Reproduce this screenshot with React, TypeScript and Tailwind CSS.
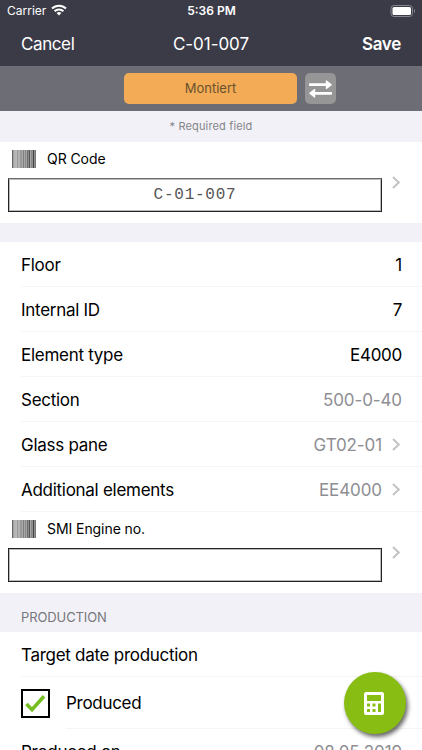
import React from "react";
import clsx from "clsx";

function Chevron() {
  return (
    <svg width="8" height="13" viewBox="0 0 8 13" fill="none" className="shrink-0">
      <path d="M1 1l5.7 5.5L1 12" stroke="#c4c4c7" strokeWidth="2" />
    </svg>
  );
}

const bars = [
  [0, 1.5, "#666"],
  [2, 2, "#b5b5b5"],
  [4.5, 1.5, "#999"],
  [6.5, 1, "#888"],
  [8, 2, "#999"],
  [10.6, 1.2, "#666"],
  [12.4, 1.6, "#888"],
  [14.6, 1.2, "#555"],
  [16.4, 2, "#555"],
  [19, 1, "#888"],
  [20.5, 2, "#444"],
  [23, 1, "#777"],
] as const;

function Barcode() {
  return (
    <svg width="24" height="18" viewBox="0 0 24 18" className="shrink-0">
      <rect width="24" height="18" fill="#dcdcdc" />
      {bars.map(([x, w, fill]) => (
        <rect key={x} x={x} width={w} height="18" fill={fill} />
      ))}
    </svg>
  );
}

function CodeField({ label, value }: { label: string; value?: string }) {
  return (
    <div className="flex h-[81px] shrink-0 items-center bg-white pl-2 pr-[22px]">
      <div className="h-full w-[374px] pt-2">
        <div className="flex h-[18px] items-center gap-[11px] pl-1">
          <Barcode />
          <span className="pb-0.5 text-[14px] tracking-[-0.07px]">{label}</span>
        </div>
        <div
          className={clsx(
            "mt-[10px] flex h-[34px] items-center justify-center border border-[#222] pb-px font-['Liberation_Mono',monospace] text-[16px] tracking-[0.75px] text-[#555] outline outline-[0.5px] -outline-offset-2 outline-[#bbb]",
            value && "border-t-2 border-t-[#6c6c6c]"
          )}
        >
          {value}
        </div>
      </div>
      <div className="ml-auto">
        <Chevron />
      </div>
    </div>
  );
}

type RowProps = {
  label: string;
  value?: string;
  muted?: boolean;
  link?: boolean;
};

function Row({ label, value, muted, link }: RowProps) {
  return (
    <div className="ml-[21px] flex h-[45px] shrink-0 items-center justify-between border-b border-[#f5f5f6] pr-5 text-[17px] tracking-[-0.28px]">
      <span className="pt-[3px]">{label}</span>
      <span
        className={clsx("flex items-center gap-[10px]", muted && "tracking-[-0.1px] text-[#8e8e93]", link && "pr-0.5")}
      >
        <span className="pt-[3px]">{value}</span>
        {link && <Chevron />}
      </span>
    </div>
  );
}

function StatusBar() {
  return (
    <div className="grid h-[21px] grid-cols-3 items-center pl-[7px] pr-[6px] pt-px text-[12px]">
      <div className="flex items-center gap-[5px]">
        <span>Carrier</span>
        <svg width="16" height="12" viewBox="0 0 16 12" fill="none" stroke="white" strokeWidth="2" className="relative -top-px">
          <path d="M1 4.5a10 10 0 0 1 14 0M3.6 7.3a6.2 6.2 0 0 1 8.8 0" />
          <path d="M8 11.5L5.6 9.1a3.4 3.4 0 0 1 4.8 0z" fill="white" stroke="none" />
        </svg>
      </div>
      <span className="text-center font-semibold">5:36 PM</span>
      <svg width="26" height="12" viewBox="0 0 26 12" className="justify-self-end">
        <rect x="1" y=".5" width="21.5" height="11" rx="3" fill="none" stroke="#85858d" />
        <rect x="2.5" y="2" width="18.5" height="8" rx="1.5" fill="white" />
        <path d="M24 4v4c1.4-.6 1.4-3.4 0-4z" fill="#85858d" />
      </svg>
    </div>
  );
}

export default function App() {
  return (
    <div className="relative flex h-[750px] w-[422px] flex-col overflow-hidden bg-white font-['Inter','Liberation_Sans',sans-serif] text-black">
      <header className="h-[66px] shrink-0 bg-[#3b3b47] text-white">
        <StatusBar />
        <div className="grid h-[45px] grid-cols-3 items-center px-[21px] pt-0.5 text-[17px]">
          <span className="tracking-[-0.4px]">Cancel</span>
          <span className="text-center tracking-[-0.05px]">C-01-007</span>
          <span className="text-right font-semibold tracking-[-0.3px]">Save</span>
        </div>
      </header>

      <div className="flex h-[45px] shrink-0 items-center gap-2 bg-[#6d6d76] pl-[124px]">
        <button className="h-[31px] w-[173px] rounded-[5px] bg-[#f3ac55] pt-px text-[13px] text-[#69512f]">
          Montiert
        </button>
        <button className="flex h-[31px] w-[31px] items-center justify-center rounded-[5px] bg-[#969696]">
          <svg width="23" height="18" viewBox="0 0 23 18" fill="white">
            <path d="M.8 3.3h16V.8q0-1 .9-.3l4.6 3.5q.8.7 0 1.4l-4.6 3.5q-.9.5-.9-.4V6.1h-16q-.8 0-.8-.8v-1.2q0-.8.8-.8z" />
            <path d="M22.2 11.9h-16V9.4q0-1-.9-.3L.7 12.6q-.8.7 0 1.4l4.6 3.5q.9.5.9-.4v-2.4h16q.8 0 .8-.8v-1.2q0-.8-.8-.8z" />
          </svg>
        </button>
      </div>

      <div className="flex h-[31px] shrink-0 items-center justify-center bg-[#f2f1f7] text-[11px] tracking-[0.15px] text-[#85858a]">
        * Required field
      </div>

      <CodeField label="QR Code" value="C-01-007" />

      <div className="h-[19px] shrink-0 bg-[#f2f1f7]" />

      <Row label="Floor" value="1" />
      <Row label="Internal ID" value="7" />
      <Row label="Element type" value="E4000" />
      <Row label="Section" value="500-0-40" muted />
      <Row label="Glass pane" value="GT02-01" muted link />
      <Row label="Additional elements" value="EE4000" muted link />

      <CodeField label="SMI Engine no." />

      <div className="flex h-[39px] shrink-0 items-center bg-[#f2f1f7] pl-[21px] pt-[11px] text-[13px] tracking-[-0.1px] text-[#77777c]">
        PRODUCTION
      </div>
      <Row label="Target date production" />
      <div className="flex h-[52px] shrink-0 items-center pl-[21px]">
        <div className="flex h-[29px] w-[29px] items-center justify-center border-2 border-black">
          <svg width="21" height="19" viewBox="0 0 21 19" fill="none">
            <path d="M1.5 10l5.5 5.7L19 2.3" stroke="#75bd21" strokeWidth="3.6" />
          </svg>
        </div>
        <div className="ml-4 flex h-full flex-1 items-center border-b border-[#f5f5f6] pt-[3px] text-[17px] tracking-[-0.3px]">
          Produced
        </div>
      </div>
      <Row label="Produced on" value="08.05.2019" muted />

      <button className="absolute left-[344px] top-[672px] flex h-[62px] w-[62px] items-center justify-center rounded-full bg-[#88bd13] shadow-[2px_3px_4px_rgba(0,0,0,0.6)]">
        <svg width="20" height="23" viewBox="0 0 20 23" className="relative -left-px">
          <path
            fill="white"
            fillRule="evenodd"
            d="M2 0h16q2 0 2 2v19q0 2-2 2H2q-2 0-2-2V2Q0 0 2 0zM3 3v6h14V3zM3 11.5v3h3v-3zM8.5 11.5v3h3v-3zM3 17v3h3v-3zM8.5 17v3h3v-3zM14 11.5V20h3v-8.5z"
          />
        </svg>
      </button>
    </div>
  );
}
